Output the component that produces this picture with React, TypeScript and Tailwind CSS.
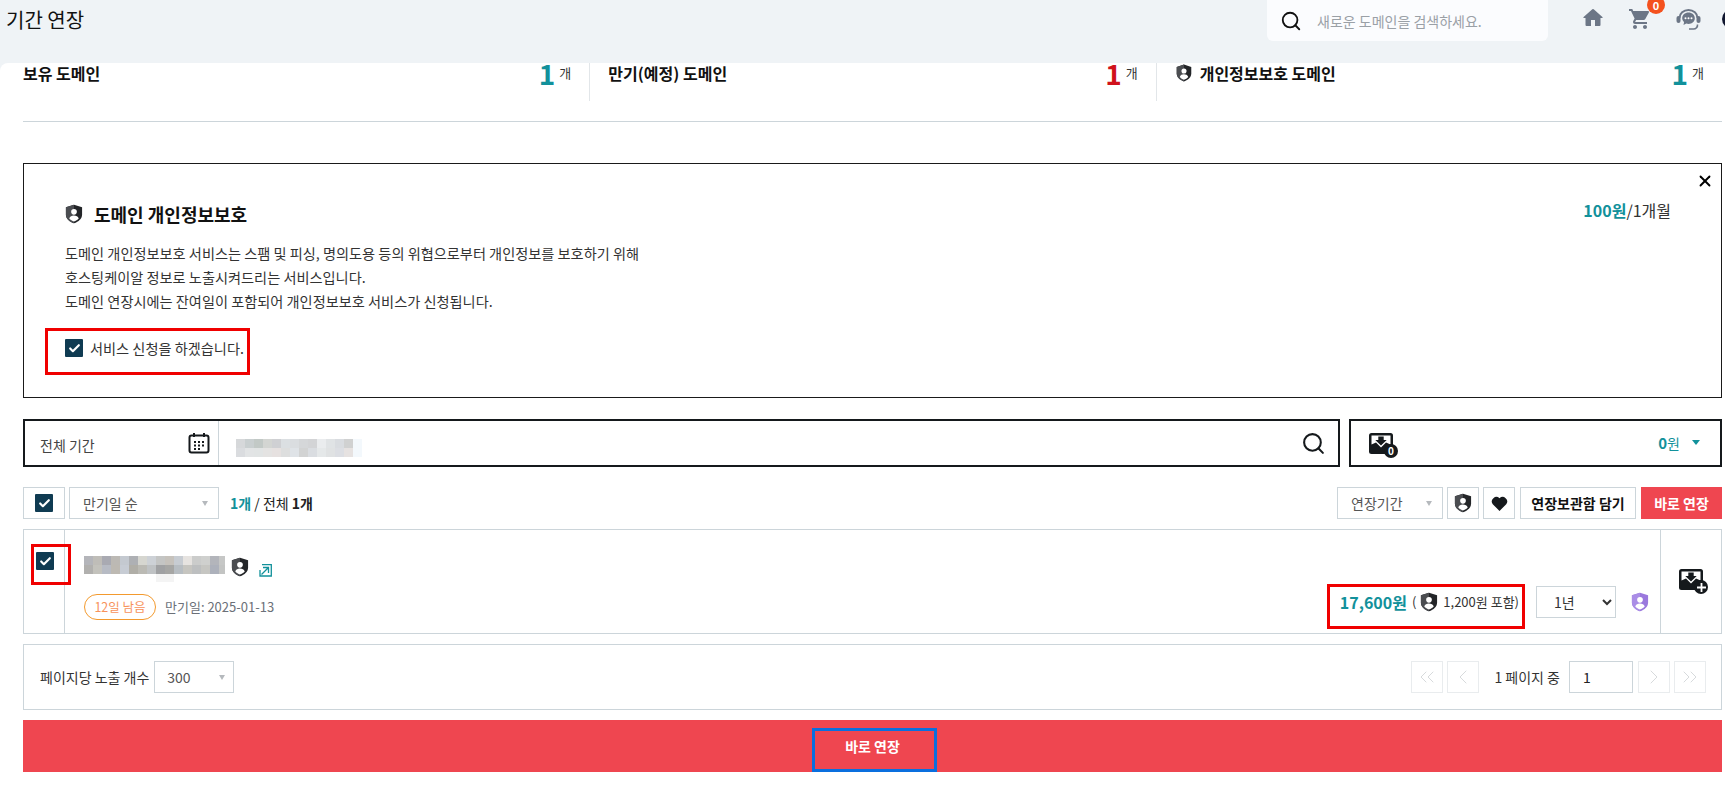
import { ChevronLeft, ChevronRight, ChevronsLeft, ChevronsRight, Check, Search, X } from 'lucide-react';

const searchTiles = [
  'bg-[#d6d8da]', 'bg-[#c9cfd0]', 'bg-[#c2c9c6]', 'bg-[#d3d5d2]', 'bg-[#cfd0d3]', 'bg-[#dbdfe2]', 'bg-[#dadde0]', 'bg-[#d5d7d9]', 'bg-[#d3d4d6]', 'bg-[#eaecee]', 'bg-[#e0e3e5]', 'bg-[#d9dce0]', 'bg-[#d0d1d1]', 'bg-[#f3f8fc]',
  'bg-[#dadcdf]', 'bg-[#e2e4e5]', 'bg-[#e1e4e4]', 'bg-[#e4e3e2]', 'bg-[#e6e1e0]', 'bg-[#dddede]', 'bg-[#dfe3e7]', 'bg-[#d2d3d3]', 'bg-[#dadde1]', 'bg-[#e5e8e9]', 'bg-[#e0e2e3]', 'bg-[#dcdee3]', 'bg-[#e6e2e1]', 'bg-[#f3f8fc]',
];

const nameTiles = [
  'bg-[#b4b5ba]', 'bg-[#bfbdb8]', 'bg-[#a9aab2]', 'bg-[#bcb9b4]', 'bg-[#c4c9d0]', 'bg-[#aeb0b4]', 'bg-[#d6d6d0]', 'bg-[#cdd1d6]', 'bg-[#c4c5c4]', 'bg-[#c6c2bc]', 'bg-[#c7ccd2]', 'bg-[#e6e3e0]', 'bg-[#cbcccb]', 'bg-[#cfd0ce]', 'bg-[#b3b5bb]', 'bg-[#c6c7c6]',
  'bg-[#b1b0ae]', 'bg-[#c3c2bc]', 'bg-[#b7bbc4]', 'bg-[#bdb9b2]', 'bg-[#c7ccd4]', 'bg-[#b0aea7]', 'bg-[#bbbab4]', 'bg-[#bfc2c4]', 'bg-[#a0a1a3]', 'bg-[#a6a6a4]', 'bg-[#b7bdc2]', 'bg-[#c6c5c0]', 'bg-[#bdbfc0]', 'bg-[#c6c6c2]', 'bg-[#adb1bb]', 'bg-[#c3c4c3]',
];

function ShieldIcon({ size = 18, color = '#232528', light = '#4b4d51' }: { size?: number; color?: string; light?: string }) {
  return (
    <svg width={size} height={size} viewBox="0 0 24 24" className="shrink-0">
      <path d="M12 .8 21.700 4v8.500c0 5-4 8.500-9.700 10.700C6.300 21 2.300 17.500 2.300 12.500V4z" fill={color} />
      <path d="M12 .8 2.300 4v8.500C2.300 17.500 6.300 21 12 23.200z" fill={light} />
      <circle cx="12" cy="9.400" r="3.400" fill="#fff" />
      <path d="M6.300 17.300c1-2.500 3-3.500 5.700-3.500s4.700 1 5.700 3.500c-1.500 1.700-3.500 3-5.700 3.800-2.200-.8-4.200-2.100-5.700-3.800z" fill="#fff" />
    </svg>
  );
}

function BoxIcon() {
  return (
    <svg width="24" height="21" viewBox="0 0 24 21" className="shrink-0">
      <rect width="24" height="21" rx="2.500" fill="#15191c" />
      <path d="M2.500 2.500h19v9l-4.500-2-5 5-5-5-4.500 2z" fill="#fff" />
      <path d="M9.300 3.500h5.400V7h3L12 12.500 6.300 7h3z" fill="#15191c" />
    </svg>
  );
}

function SquareCheck() {
  return (
    <span className="flex h-[18px] w-[18px] shrink-0 items-center justify-center rounded-[1px] bg-[#0f3b52]">
      <Check size={13} strokeWidth={4} className="text-white" />
    </span>
  );
}

function FakeSelect({ label, className }: { label: string; className: string }) {
  return (
    <div className={`flex items-center justify-between border border-[#ccd5da] bg-white text-[#555] ${className}`}>
      <span>{label}</span>
      <span className="h-0 w-0 border-x-[3.500px] border-t-[5px] border-x-transparent border-t-[#b5b9bd]" />
    </div>
  );
}

function StatCell({ label, value, tone, shield, divider }: { label: string; value: string; tone: string; shield?: boolean; divider?: boolean }) {
  return (
    <div className={`flex h-[38px] justify-between pr-[18px] ${divider ? 'border-l border-[#e2e6e9] pl-[18px]' : ''}`}>
      <div className="flex h-5 items-center gap-[7px] text-base leading-5 font-bold text-[#111]">
        {shield && <ShieldIcon size={18} />}
        <span>{label}</span>
      </div>
      <div className="flex h-5 items-center gap-[4px]">
        <span className={`text-[28px] leading-5 font-bold ${tone}`}>{value}</span>
        <span className="text-[13px] leading-5 text-[#333]">개</span>
      </div>
    </div>
  );
}

function PageButton({ children }: { children: React.ReactNode }) {
  return (
    <span className="flex h-8 w-8 items-center justify-center border border-[#e9ecee] text-[#d3d6d8]">{children}</span>
  );
}

export default function App() {
  return (
    <div className="relative h-[795px] w-[1725px] overflow-hidden bg-[#eff3f6] font-['Noto_Sans_CJK_KR','Noto_Sans',sans-serif] text-[#222]">
      <header className="flex h-[63px] items-start justify-between pl-[6px]">
        <h1 className="mt-[5px] text-xl leading-[30px] font-normal text-[#111]">기간 연장</h1>
        <div className="flex w-[458px] shrink-0 items-start overflow-hidden">
          <div className="flex h-[41px] w-[281px] shrink-0 items-center rounded-b-md bg-[#fbfcfe] pl-[13px]">
            <Search size={22} strokeWidth={2} className="shrink-0 text-[#111]" />
            <input readOnly placeholder="새로운 도메인을 검색하세요." className="ml-[15px] w-[220px] bg-transparent text-sm outline-none placeholder:text-[#9aa0a6]" />
          </div>
          <div className="ml-[33px] mt-[6px] flex shrink-0 items-start">
            <svg width="24" height="24" viewBox="0 0 24 24" fill="#6c7686" className="shrink-0"><path d="M10 20v-6h4v6h4.500a1 1 0 0 0 1-1v-7h1.600a.5.5 0 0 0 .3-.9L12.700 3.300a1 1 0 0 0-1.400 0L2.600 11.100a.5.5 0 0 0 .3.900h1.600v7a1 1 0 0 0 1 1z" /></svg>
            <span className="relative ml-[23px] mt-[1px] shrink-0">
              <svg width="24" height="24" viewBox="0 0 24 24" fill="#6c7686"><path d="M7 18c-1.100 0-1.990.9-1.990 2S5.900 22 7 22s2-.9 2-2-.9-2-2-2zM1 2v2h2l3.600 7.590-1.350 2.450c-.16.28-.25.61-.25.96 0 1.100.9 2 2 2h12v-2H7.420c-.14 0-.25-.11-.25-.25l.03-.12.9-1.630h7.450c.75 0 1.410-.41 1.750-1.030l3.580-6.490c.08-.14.12-.31.12-.48 0-.55-.45-1-1-1H5.210l-.94-2H1zM17 18c-1.100 0-1.990.9-1.990 2s.89 2 1.990 2 2-.9 2-2-.9-2-2-2z" /></svg>
              <span className="absolute top-[-11px] left-[19px] flex h-[18px] w-[18px] items-center justify-center rounded-full bg-[#f4511e] text-[11px] font-bold text-white">0</span>
            </span>
            <svg width="25" height="22" viewBox="0 0 25 22" className="ml-[24px] mt-[3px] shrink-0">
              <path d="M3.500 9a9 8 0 0 1 18 0" fill="none" stroke="#6c7686" strokeWidth="2" />
              <rect x="0.500" y="7" width="4" height="7" rx="2" fill="#6c7686" />
              <rect x="20.500" y="7" width="4" height="7" rx="2" fill="#6c7686" />
              <path d="M12.500 3.500c3.600 0 6.300 2.400 6.300 5.700s-2.700 5.700-6.300 5.700c-.8 0-1.500-.1-2.200-.4L7.500 16l.6-3c-1.200-1-1.900-2.300-1.900-3.800 0-3.300 2.700-5.700 6.300-5.700z" fill="#6c7686" />
              <circle cx="9.500" cy="9.300" r="1" fill="#fff" /><circle cx="12.500" cy="9.300" r="1" fill="#fff" /><circle cx="15.500" cy="9.300" r="1" fill="#fff" />
              <path d="M13 20h4.500a4 4 0 0 0 4-4.500" fill="none" stroke="#6c7686" strokeWidth="1.600" />
            </svg>
            <span className="ml-[21px] mt-[3px] h-[20px] w-[20px] shrink-0 rounded-full bg-[#10162f]" />
          </div>
        </div>
      </header>

      <main className="h-[732px] rounded-tl-[8px] bg-white pl-[23px] pr-[3px]">
        <section className="grid h-[59px] grid-cols-3 border-b border-[#ccd5da]">
          <StatCell label="보유 도메인" value="1" tone="text-[#12919b]" />
          <StatCell label="만기(예정) 도메인" value="1" tone="text-[#d0121b]" divider />
          <StatCell label="개인정보보호 도메인" value="1" tone="text-[#12919b]" shield divider />
        </section>

        <section className="relative mt-[41px] h-[235px] border border-[#1a1a1a] pl-[41px] pr-[50px] pt-[32px]">
          <button className="absolute top-[8px] right-[7px] text-black"><X size={18} strokeWidth={2.500} /></button>
          <div className="flex items-start justify-between">
            <div className="mt-[4px] flex items-center gap-[10px]">
              <span className="-ml-px"><ShieldIcon size={20} /></span>
              <h2 className="text-lg leading-[28px] font-bold text-[#111]">도메인 개인정보보호</h2>
            </div>
            <p className="text-base leading-[28px] text-[#333]"><b className="text-[#12919b]">100원</b>/1개월</p>
          </div>
          <div className="mt-[13px] text-[14.200px] leading-[24px] text-[#333]">
            <p>도메인 개인정보보호 서비스는 스팸 및 피싱, 명의도용 등의 위협으로부터 개인정보를 보호하기 위해</p>
            <p>호스팅케이알 정보로 노출시켜드리는 서비스입니다.</p>
            <p>도메인 연장시에는 잔여일이 포함되어 개인정보보호 서비스가 신청됩니다.</p>
          </div>
          <label className="mt-[23px] flex items-center gap-[7px] text-[14.200px] leading-[24px] text-[#333]">
            <SquareCheck />
            <span>서비스 신청을 하겠습니다.</span>
          </label>
          <div className="absolute top-[164px] left-[21px] h-[47px] w-[205px] border-[3px] border-[#f00000]" />
        </section>

        <section className="mt-[21px] flex h-[48px] gap-[9px]">
          <div className="flex min-w-0 flex-1 border-2 border-[#15191c]">
            <div className="flex w-[194px] items-center justify-between border-r border-[#ccd5da] pl-[15px] pr-[8px] text-sm text-[#444]">
              <span className="mt-[3px]">전체 기간</span>
              <svg width="22" height="22" viewBox="0 0 22 22" fill="none" stroke="#15191c" strokeWidth="2">
                <rect x="1.500" y="3.500" width="19" height="17" rx="2" />
                <path d="M6 1v4M16 1v4" />
                <path d="M6 10h2M10 10h2M14 10h2M6 13.500h2M10 13.500h2M14 13.500h2M6 17h2M10 17h2" />
              </svg>
            </div>
            <div className="flex flex-1 items-center justify-between pl-[17px] pr-[12px]">
              <div className="mt-[10px] grid grid-cols-[repeat(14,9px)] grid-rows-[9px_9px]">
                {searchTiles.map((tile, i) => <span key={i} className={tile} />)}
              </div>
              <Search size={25} strokeWidth={2} className="text-[#15191c]" />
            </div>
          </div>
          <div className="flex w-[373px] items-center justify-between border-2 border-[#15191c] pl-[18px] pr-[20px]">
            <span className="relative">
              <BoxIcon />
              <span className="absolute top-[11px] left-[15px] flex h-[14px] w-[14px] items-center justify-center rounded-full bg-[#15191c] text-[10px] font-bold text-white">0</span>
            </span>
            <div className="flex items-center gap-[12px]">
              <span className="text-sm text-[#12919b]"><b className="text-[15px]">0</b>원</span>
              <span className="h-0 w-0 border-x-[4px] border-t-[5px] border-x-transparent border-t-[#12919b]" />
            </div>
          </div>
        </section>

        <section className="mt-[20px] flex h-8 items-stretch">
          <div className="flex w-[42px] items-center justify-center border border-[#ccd5da]"><SquareCheck /></div>
          <FakeSelect label="만기일 순" className="ml-[4px] w-[150px] pl-[13px] pr-[10px] text-sm" />
          <p className="ml-[11px] self-center text-sm text-[#222]"><span className="font-bold text-[#12919b]">1개</span> / 전체 <b>1개</b></p>
          <div className="ml-auto flex items-stretch">
            <FakeSelect label="연장기간" className="w-[106px] pl-[13px] pr-[10px] text-sm" />
            <span className="ml-[4px] flex w-8 items-center justify-center border border-[#ccd5da]"><ShieldIcon size={20} /></span>
            <span className="ml-[4px] flex w-8 items-center justify-center border border-[#ccd5da]">
              <svg width="17" height="15" viewBox="0 0 24 21" fill="#15191c"><path d="M12 21 2.500 11.500A6.400 6.400 0 0 1 12 3a6.400 6.400 0 0 1 9.500 8.500z" /></svg>
            </span>
            <button className="ml-[5px] w-[116px] border border-[#ccd5da] text-sm font-bold text-[#111]">연장보관함 담기</button>
            <button className="ml-[5px] w-[81px] bg-[#ef4650] text-sm font-bold text-white">바로 연장</button>
          </div>
        </section>

        <section className="relative mt-[10px] flex h-[105px] border border-[#ccd5da]">
          <div className="w-[41px] shrink-0 border-r border-[#ccd5da] pl-[12px] pt-[22px]"><SquareCheck /></div>
          <div className="flex min-w-0 flex-1 flex-col pl-[19px] pt-[26px]">
            <div className="flex items-start">
              <div className="relative h-[18px]">
                <div className="grid grid-cols-[repeat(15,9px)_6px] grid-rows-[9px_9px]">
                  {nameTiles.map((tile, i) => <span key={i} className={tile} />)}
                </div>
                <span className="absolute top-[18px] left-[72px] h-[8px] w-[18px] bg-[#f4f4f4]" />
              </div>
              <span className="ml-[5px] mt-[1px]"><ShieldIcon size={20} /></span>
              <svg width="13" height="13" viewBox="0 0 13 13" fill="none" stroke="#12919b" strokeWidth="1.300" className="ml-[9px] mt-[8px]">
                <path d="M3 .7h9.300V12H1V6" />
                <path d="M9.500 3.500 2.500 10.500M4 3.500h5.500V9" />
              </svg>
            </div>
            <div className="mt-[17px] flex items-center">
              <span className="flex h-[26px] w-[72px] items-center justify-center rounded-full border border-[#f39a2e] text-[12.500px] text-[#f7935c]">12일 남음</span>
              <span className="ml-[9px] text-[13px] text-[#6b7078]">만기일: 2025-01-13</span>
            </div>
          </div>
          <div className="flex items-end pb-[15px]">
            <div className="flex h-8 items-center">
              <span className="text-base font-bold text-[#12919b]">17,600원</span>
              <span className="ml-[5px] flex items-center text-[13px] leading-6 text-[#333]">( <span className="ml-[3px] mr-[4px]"><ShieldIcon size={20} /></span>1,200원 포함)</span>
              <select defaultValue="1년" className="ml-[17px] h-8 w-[80px] border border-[#ccd5da] bg-white pl-[13px] text-sm text-[#333]">
                <option>1년</option>
                <option>2년</option>
              </select>
              <span className="ml-[14px]"><ShieldIcon size={20} color="#9a78dd" light="#aa8de6" /></span>
            </div>
          </div>
          <div className="ml-[10px] flex w-[61px] shrink-0 items-start justify-center border-l border-[#ccd5da] pt-[39px]">
            <span className="relative">
              <BoxIcon />
              <span className="absolute top-[11px] left-[15px] flex h-[14px] w-[14px] items-center justify-center rounded-full bg-[#15191c]">
                <svg width="9" height="9" viewBox="0 0 9 9" stroke="#fff" strokeWidth="1.800"><path d="M4.500 0v9M0 4.500h9" /></svg>
              </span>
            </span>
          </div>
          <div className="absolute top-[14px] left-[7px] h-[41px] w-[40px] border-[3px] border-[#f00000]" />
          <div className="absolute top-[54px] left-[1303px] h-[45px] w-[198px] border-[3px] border-[#f00000]" />
        </section>

        <section className="mt-[10px] flex h-[66px] items-center justify-between border border-[#ccd5da] pl-[16px] pr-[15px]">
          <div className="flex items-center text-sm text-[#333]">
            <span>페이지당 노출 개수</span>
            <FakeSelect label="300" className="ml-[5px] h-8 w-[80px] pl-[12px] pr-[8px]" />
          </div>
          <div className="flex items-center">
            <PageButton><ChevronsLeft size={24} strokeWidth={0.900} /></PageButton>
            <span className="ml-[4px]"><PageButton><ChevronLeft size={24} strokeWidth={0.900} /></PageButton></span>
            <span className="ml-[15px] text-sm text-[#333]">1 페이지 중</span>
            <input readOnly defaultValue="1" className="ml-[9px] h-8 w-[64px] border border-[#ccd5da] pl-[13px] text-sm outline-none" />
            <span className="ml-[5px]"><PageButton><ChevronRight size={24} strokeWidth={0.900} /></PageButton></span>
            <span className="ml-[4px]"><PageButton><ChevronsRight size={24} strokeWidth={0.900} /></PageButton></span>
          </div>
        </section>

        <section className="relative mt-[10px] flex h-[52px] items-center justify-center bg-[#ef4650]">
          <button className="text-sm font-bold text-white">바로 연장</button>
          <div className="absolute top-[8px] left-[789px] h-[44px] w-[125px] border-[3px] border-[#0a6fde]" />
        </section>
      </main>
    </div>
  );
}
